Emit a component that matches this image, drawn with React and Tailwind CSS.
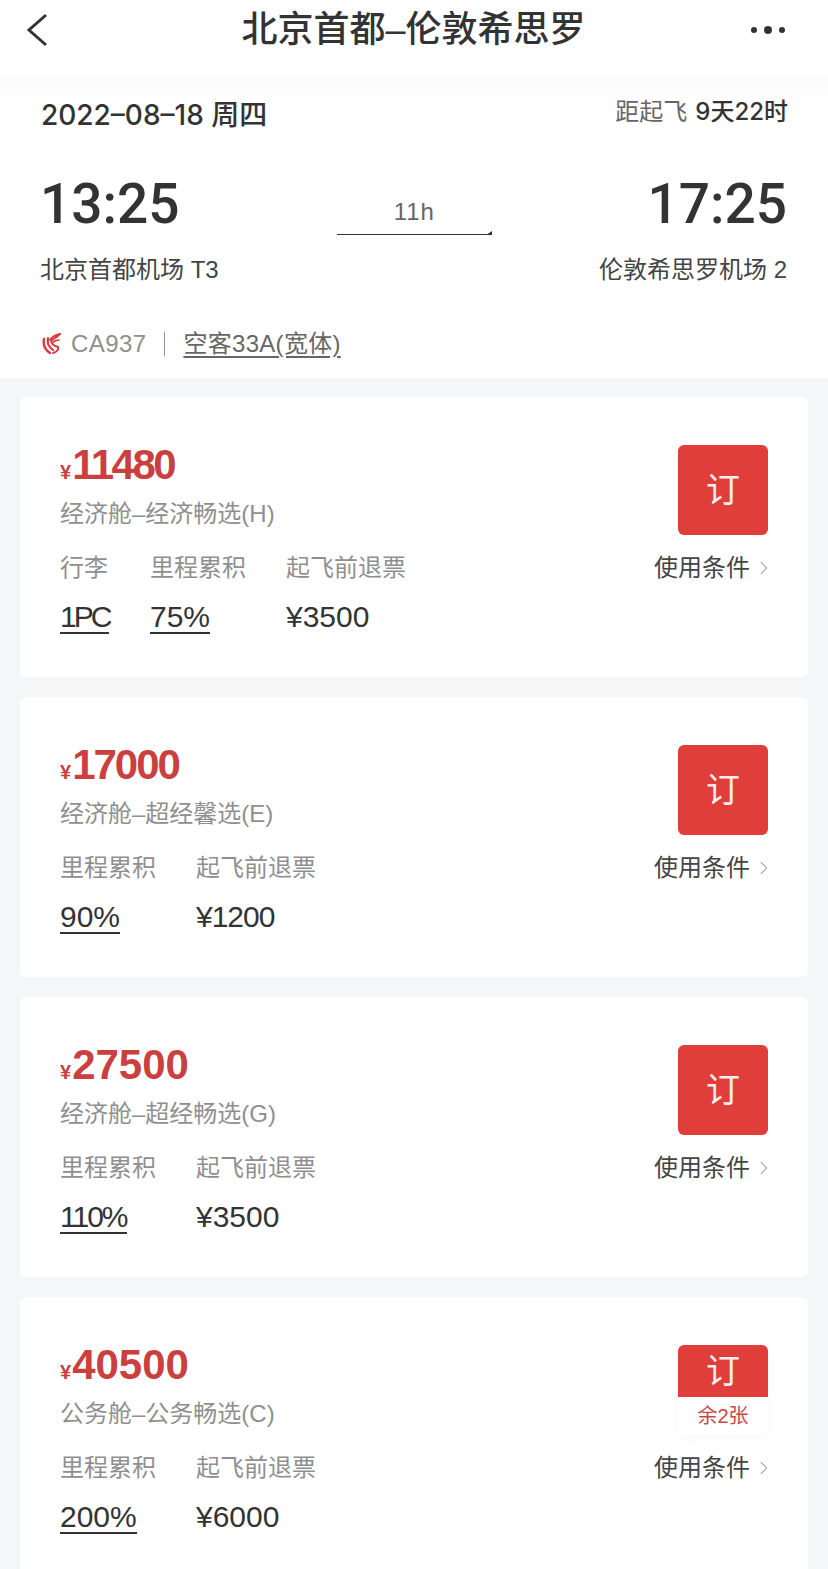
import { ChevronRight } from "lucide-react";

const fares = [
  {
    price: "11480",
    priceTracking: "tracking-[-2.5px]",
    cabin: "经济舱–经济畅选(H)",
    cols: [
      { label: "行李", value: "1PC", link: true, width: "w-[90px]", tracking: "tracking-[-3px]" },
      { label: "里程累积", value: "75%", link: true, width: "w-[136px]" },
      { label: "起飞前退票", value: "¥3500" },
    ],
  },
  {
    price: "17000",
    priceTracking: "tracking-[-2px]",
    cabin: "经济舱–超经馨选(E)",
    cols: [
      { label: "里程累积", value: "90%", link: true, width: "w-[136px]" },
      { label: "起飞前退票", value: "¥1200", tracking: "tracking-[-1px]" },
    ],
  },
  {
    price: "27500",
    cabin: "经济舱–超经畅选(G)",
    cols: [
      { label: "里程累积", value: "110%", link: true, width: "w-[136px]", tracking: "tracking-[-2px]" },
      { label: "起飞前退票", value: "¥3500" },
    ],
  },
  {
    price: "40500",
    cabin: "公务舱–公务畅选(C)",
    left: "余2张",
    cols: [
      { label: "里程累积", value: "200%", link: true, width: "w-[136px]" },
      { label: "起飞前退票", value: "¥6000" },
    ],
  },
];

function AirChinaLogo() {
  return (
    <svg width="20" height="22" viewBox="0 0 20 22" fill="none" stroke="#e0393e" strokeLinecap="round">
      <path d="M3 6c-1 5 0 10 6 14" strokeWidth="2.4" />
      <path d="M7 5c-1 5 0 8 5 12" strokeWidth="2.2" />
      <path d="M10 6c0 4 2 7 7 8c1 2-1 5-5 6" strokeWidth="2" />
      <path d="M9 7C11 4 14 2 19 1c-2 2-4 4-8 6" strokeWidth="1.8" />
      <path d="M11 10c2-2 4-3 7-3" strokeWidth="1.6" />
    </svg>
  );
}

function BookButton({ left }) {
  if (left) {
    return (
      <div className="w-[90px] h-[90px] rounded-md bg-white shadow-[0_4px_12px_rgba(0,0,0,0.03)] overflow-hidden flex flex-col">
        <div className="h-[52px] bg-[#e03e3a] flex items-center justify-center text-[34px] leading-none text-[#fbeeee]">
          订
        </div>
        <div className="flex-1 flex items-center justify-center text-[20px] leading-none text-[#c9474a]">
          {left}
        </div>
      </div>
    );
  }
  return (
    <div className="w-[90px] h-[90px] rounded-md bg-[#e03e3a] flex items-center justify-center text-[34px] leading-none text-[#fbeeee]">
      订
    </div>
  );
}

function FareCard({ fare }) {
  return (
    <div className="bg-white rounded-md h-[280px] pt-[48px] px-[40px] flex justify-between shrink-0">
      <div>
        <div className="flex items-baseline h-[40px] text-[#cc3f3f] font-bold leading-[40px]">
          <span className="text-[20px] mr-[1px]">¥</span>
          <span className={`text-[42px] ${fare.priceTracking || ""}`}>{fare.price}</span>
        </div>
        <div className="mt-[12px] text-[24px] leading-[34px] text-[#8f8f8f]">{fare.cabin}</div>
        <div className="flex mt-[19px]">
          {fare.cols.map((col, i) => (
            <div key={i} className={col.width}>
              <div className="text-[24px] leading-[36px] text-[#8f8f8f]">{col.label}</div>
              <div className={`mt-[13px] text-[30px] leading-[36px] text-[#333333] ${col.tracking || ""}`}>
                {col.link ? (
                  <span className="border-b-2 border-[#333333] inline-block leading-[30px]">{col.value}</span>
                ) : (
                  col.value
                )}
              </div>
            </div>
          ))}
        </div>
      </div>
      <div className="flex flex-col items-end">
        <BookButton left={fare.left} />
        <div className="mt-[15px] flex items-center text-[24px] leading-[36px] text-[#444444]">
          使用条件
          <ChevronRight size={22} strokeWidth={1.2} color="#aaaaaa" className="mr-[-7px] ml-[3px]" />
        </div>
      </div>
    </div>
  );
}

export default function App() {
  return (
    <div
      className="w-[828px] h-[1569px] overflow-hidden bg-[#f4f6f8] flex flex-col"
      style={{ fontFamily: '"Liberation Sans", "Noto Sans CJK SC", sans-serif' }}
    >
      <div className="bg-white h-[378px] shrink-0 flex flex-col">
        <div className="h-[74px] flex items-center justify-between pl-[26px] pr-[43px] pb-[14px]">
          <svg width="24" height="36" viewBox="0 0 24 36" fill="none" stroke="#333333" strokeWidth="3">
            <path d="M20 3L3 18L20 33" />
          </svg>
          <div className="text-[36px] leading-none font-medium text-[#333333] ml-[26px]">北京首都–伦敦希思罗</div>
          <div className="flex items-center gap-[7px]">
            <span className="w-[6px] h-[6px] rounded-full bg-[#333333]" />
            <span className="w-[8px] h-[8px] rounded-full bg-[#333333]" />
            <span className="w-[6px] h-[6px] rounded-full bg-[#333333]" />
          </div>
        </div>
        <div className="flex-1 pl-[40px] pr-[41px] bg-[linear-gradient(#fbfbfb,#ffffff_40px)]">
          <div className="flex justify-between items-start pt-[21px]">
            <div
              className="ml-[1px] text-[28px] leading-[40px] font-medium text-[#333333]"
              style={{ fontFamily: 'Inter, "Noto Sans CJK SC", sans-serif' }}
            >
              2022–08–18 周四
            </div>
            <div className="text-[24px] leading-[36px] text-[#666666] mr-[-1px] mt-[-1px]">
              距起飞
              <span className="ml-[8px] font-medium text-[#333333]" style={{ fontFamily: 'Inter, "Noto Sans CJK SC", sans-serif' }}>
                9天22时
              </span>
            </div>
          </div>
          <div className="flex justify-between items-center mt-[37px]">
            <div>
              <div
                className="text-[55px] leading-[64px] font-medium text-[#333333]"
                style={{ fontFamily: 'Roboto, sans-serif' }}
              >
                13:25
              </div>
              <div className="mt-[16px] text-[24px] leading-[36px] text-[#444444]">北京首都机场 T3</div>
            </div>
            <div className="w-[155px] mb-[28px] ml-[11px] flex flex-col items-center">
              <div className="text-[24px] leading-[28px] tracking-[1px] text-[#666666]">11h</div>
              <div className="relative w-full h-px bg-[#333333] mt-[8px]">
                <span className="absolute right-0 bottom-0 border-l-[6px] border-l-transparent border-b-[4px] border-b-[#333333]" />
              </div>
            </div>
            <div className="text-right">
              <div
                className="text-[55px] leading-[64px] font-medium text-[#333333]"
                style={{ fontFamily: 'Roboto, sans-serif' }}
              >
                17:25
              </div>
              <div className="mt-[16px] text-[24px] leading-[36px] text-[#444444]">伦敦希思罗机场 2</div>
            </div>
          </div>
          <div className="flex items-center mt-[38px] ml-[1px] text-[24px] leading-[36px] text-[#8f8f8f]">
            <AirChinaLogo />
            <span className="ml-[10px] tracking-[0.4px]">CA937</span>
            <span className="mx-[18px] w-px h-[24px] bg-[#8f8f8f]" />
            <span className="text-[#666666] tracking-[0.3px] underline underline-offset-4">空客33A(宽体)</span>
          </div>
        </div>
      </div>
      <div className="flex flex-col gap-[20px] pt-[19px] px-[20px]">
        {fares.map((fare) => (
          <FareCard key={fare.price} fare={fare} />
        ))}
      </div>
    </div>
  );
}
